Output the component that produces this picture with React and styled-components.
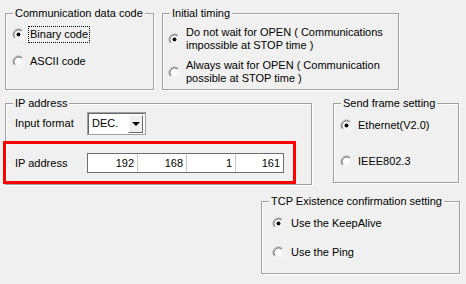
import React from "react"
import styled, { createGlobalStyle } from "styled-components"

const GlobalStyle = createGlobalStyle`
  html, body {
    margin: 0;
    padding: 0;
    background: #f0f0f0;
  }
  body {
    font-family: "Liberation Sans", Arial, sans-serif;
    font-size: 11px;
    color: #000;
  }
`

const Page = styled.div`
  width: 466px;
  height: 284px;
  box-sizing: border-box;
  padding: 13px 0 0 5px;
  background: #f0f0f0;
  display: flex;
  flex-direction: column;
  overflow: hidden;
`

const Row = styled.div`
  display: flex;
  align-items: flex-start;
  gap: ${p => p.gap || 0}px;
  margin-top: ${p => p.top || 0}px;
  padding-left: ${p => p.indent || 0}px;
`

const Group = styled.div`
  position: relative;
  box-sizing: border-box;
  width: ${p => p.w}px;
  height: ${p => p.h}px;
  border: 1px solid #a0a0a0;
  box-shadow: inset 1px 1px 0 #fff, 1px 1px 0 #fff;
  padding: ${p => p.pad || "0"};
  display: flex;
  flex-direction: column;
  gap: ${p => p.gap || 0}px;
`

const Legend = styled.span`
  position: absolute;
  top: -7px;
  left: 7px;
  padding: 0 2px;
  line-height: 13px;
  background: #f0f0f0;
  white-space: nowrap;
`

const Option = styled.div`
  display: flex;
  align-items: center;
  gap: ${p => p.gap || 5}px;
  min-height: 17px;
`

const OptionText = styled.span`
  line-height: ${p => (p.multi ? "13px" : "15px")};
  padding: ${p => (p.focus ? "1px 2px" : "0 2px")};
  margin-left: -2px;
  outline: ${p => (p.focus ? "1px dotted #000" : "none")};
  outline-offset: -1px;
  white-space: nowrap;
`

const RadioBox = styled.svg`
  flex: none;
  width: 13px;
  height: 13px;
`

const Radio = ({ checked }) => (
  <RadioBox viewBox="0 0 13 13">
    <circle cx="6.5" cy="6.5" r="5" fill="#fff" />
    <path d="M2.61 10.39 A5.5 5.5 0 0 1 10.39 2.61" fill="none" stroke="#a0a0a0" strokeWidth="1" />
    <path d="M3.32 9.68 A4.5 4.5 0 0 1 9.68 3.32" fill="none" stroke="#696969" strokeWidth="1" />
    <path d="M10.39 2.61 A5.5 5.5 0 0 1 2.61 10.39" fill="none" stroke="#ffffff" strokeWidth="1" />
    <path d="M9.68 3.32 A4.5 4.5 0 0 1 3.32 9.68" fill="none" stroke="#e3e3e3" strokeWidth="1" />
    {checked && <circle cx="6.5" cy="6.5" r="2" fill="#000" />}
  </RadioBox>
)

const FieldRow = styled.div`
  display: flex;
  align-items: center;
  padding-left: 9px;
`

const FieldLabel = styled.span`
  width: 72px;
  flex: none;
  line-height: 15px;
`

const Combo = styled.div`
  box-sizing: border-box;
  width: 59px;
  height: 23px;
  background: #fff;
  border: 1px solid #a0a0a0;
  box-shadow: inset 1px 1px 0 #696969;
  display: flex;
  align-items: center;
  padding: 2px 2px 2px 4px;
`

const ComboText = styled.span`
  flex: 1;
  line-height: 15px;
`

const ComboButton = styled.div`
  box-sizing: border-box;
  width: 15px;
  height: 18px;
  background: #f0f0f0;
  border: 1px solid;
  border-color: #fff #696969 #696969 #fff;
  display: flex;
  align-items: center;
  justify-content: center;
`

const Arrow = styled.div`
  width: 0;
  height: 0;
  border-left: 4px solid transparent;
  border-right: 4px solid transparent;
  border-top: 4px solid #000;
`

const Highlight = styled.div`
  box-sizing: border-box;
  width: 293px;
  height: 43px;
  margin: 6px 0 0 -3px;
  border: 3px solid #ff0000;
  display: flex;
  align-items: center;
  padding-top: 1px;
`

const IpField = styled.div`
  box-sizing: border-box;
  width: 197px;
  height: 20px;
  display: flex;
  background: #fff;
  border: 1px solid #6d6d6d;
`

const IpCell = styled.div`
  box-sizing: border-box;
  width: ${p => p.w}px;
  height: 100%;
  border-left: ${p => (p.first ? "none" : "1px solid #c8c8c8")};
  text-align: right;
  padding-right: 3px;
  line-height: 18px;
`

const octets = ["192", "168", "1", "161"]

export default function App() {
  return (
    <>
      <GlobalStyle />
      <Page>
        <Row gap={8}>
          <Group w={149} h={77} pad="12px 0 0 6px" gap={10}>
            <Legend>Communication data code</Legend>
            <Option>
              <Radio checked />
              <OptionText focus>Binary code</OptionText>
            </Option>
            <Option>
              <Radio />
              <OptionText>ASCII code</OptionText>
            </Option>
          </Group>
          <Group w={237} h={77} pad="12px 0 0 5px" gap={7}>
            <Legend>Initial timing</Legend>
            <Option>
              <Radio checked />
              <OptionText multi>
                Do not wait for OPEN ( Communications
                <br />
                impossible at STOP time )
              </OptionText>
            </Option>
            <Option>
              <Radio />
              <OptionText multi>
                Always wait for OPEN ( Communication
                <br />
                possible at STOP time )
              </OptionText>
            </Option>
          </Group>
        </Row>

        <Row top={13} gap={21}>
          <Group w={307} h={82} pad="8px 0 0 0">
            <Legend>IP address</Legend>
            <FieldRow>
              <FieldLabel>Input format</FieldLabel>
              <Combo>
                <ComboText>DEC.</ComboText>
                <ComboButton>
                  <Arrow />
                </ComboButton>
              </Combo>
            </FieldRow>
            <Highlight>
              <FieldRow>
                <FieldLabel>IP address</FieldLabel>
                <IpField>
                  {octets.map((o, i) => (
                    <IpCell key={i} first={i === 0} w={i === 3 ? 48 : 49}>
                      {o}
                    </IpCell>
                  ))}
                </IpField>
              </FieldRow>
            </Highlight>
          </Group>
          <Group w={126} h={80} pad="13px 0 0 6px" gap={19}>
            <Legend>Send frame setting</Legend>
            <Option>
              <Radio checked />
              <OptionText>Ethernet(V2.0)</OptionText>
            </Option>
            <Option>
              <Radio />
              <OptionText>IEEE802.3</OptionText>
            </Option>
          </Group>
        </Row>

        <Row top={16} indent={256}>
          <Group w={199} h={73} pad="13px 0 0 10px" gap={12}>
            <Legend>TCP Existence confirmation setting</Legend>
            <Option gap={6}>
              <Radio checked />
              <OptionText>Use the KeepAlive</OptionText>
            </Option>
            <Option gap={6}>
              <Radio />
              <OptionText>Use the Ping</OptionText>
            </Option>
          </Group>
        </Row>
      </Page>
    </>
  )
}
